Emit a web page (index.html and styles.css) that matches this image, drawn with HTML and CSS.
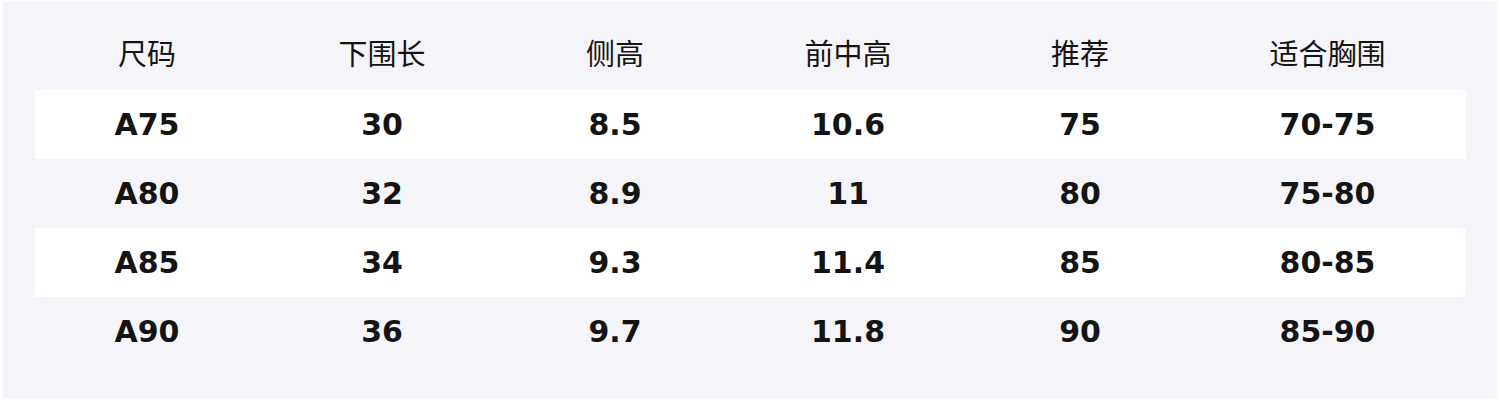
FILE: index.html
```html
<!DOCTYPE html>
<html lang="zh-CN">
<head>
<meta charset="utf-8">
<link rel="stylesheet" href="styles.css">
</head>
<body>
<div class="panel">
  <div class="row head">
    <div>尺码</div><div>下围长</div><div>侧高</div><div>前中高</div><div>推荐</div><div>适合胸围</div>
  </div>
  <div class="row body odd">
    <div>A75</div><div>30</div><div>8.5</div><div>10.6</div><div>75</div><div>70-75</div>
  </div>
  <div class="row body">
    <div>A80</div><div>32</div><div>8.9</div><div>11</div><div>80</div><div>75-80</div>
  </div>
  <div class="row body odd">
    <div>A85</div><div>34</div><div>9.3</div><div>11.4</div><div>85</div><div>80-85</div>
  </div>
  <div class="row body">
    <div>A90</div><div>36</div><div>9.7</div><div>11.8</div><div>90</div><div>85-90</div>
  </div>
</div>
</body>
</html>
```

FILE: styles.css
```css
html, body {
  margin: 0;
  padding: 0;
  background: #ffffff;
}
.panel {
  margin: 2px 3px 0 3px;
  height: 396px;
  box-sizing: border-box;
  background: #f4f4f9;
  padding: 18px 31px 0 32px;
  color: #141414;
}
.row {
  display: grid;
  grid-template-columns: 224px 246px 220px 246px 218px 277px;
  align-items: center;
  text-align: center;
}
.head {
  height: 70px;
  box-sizing: border-box;
  padding-bottom: 6px;
  font-family: "Noto Sans CJK SC", "Noto Sans", sans-serif;
  font-size: 29px;
  font-weight: 400;
}
.body {
  height: 69px;
  font-family: "DejaVu Sans", "Liberation Sans", sans-serif;
  font-size: 30px;
  font-weight: 700;
}
.odd {
  background: #ffffff;
}
```
